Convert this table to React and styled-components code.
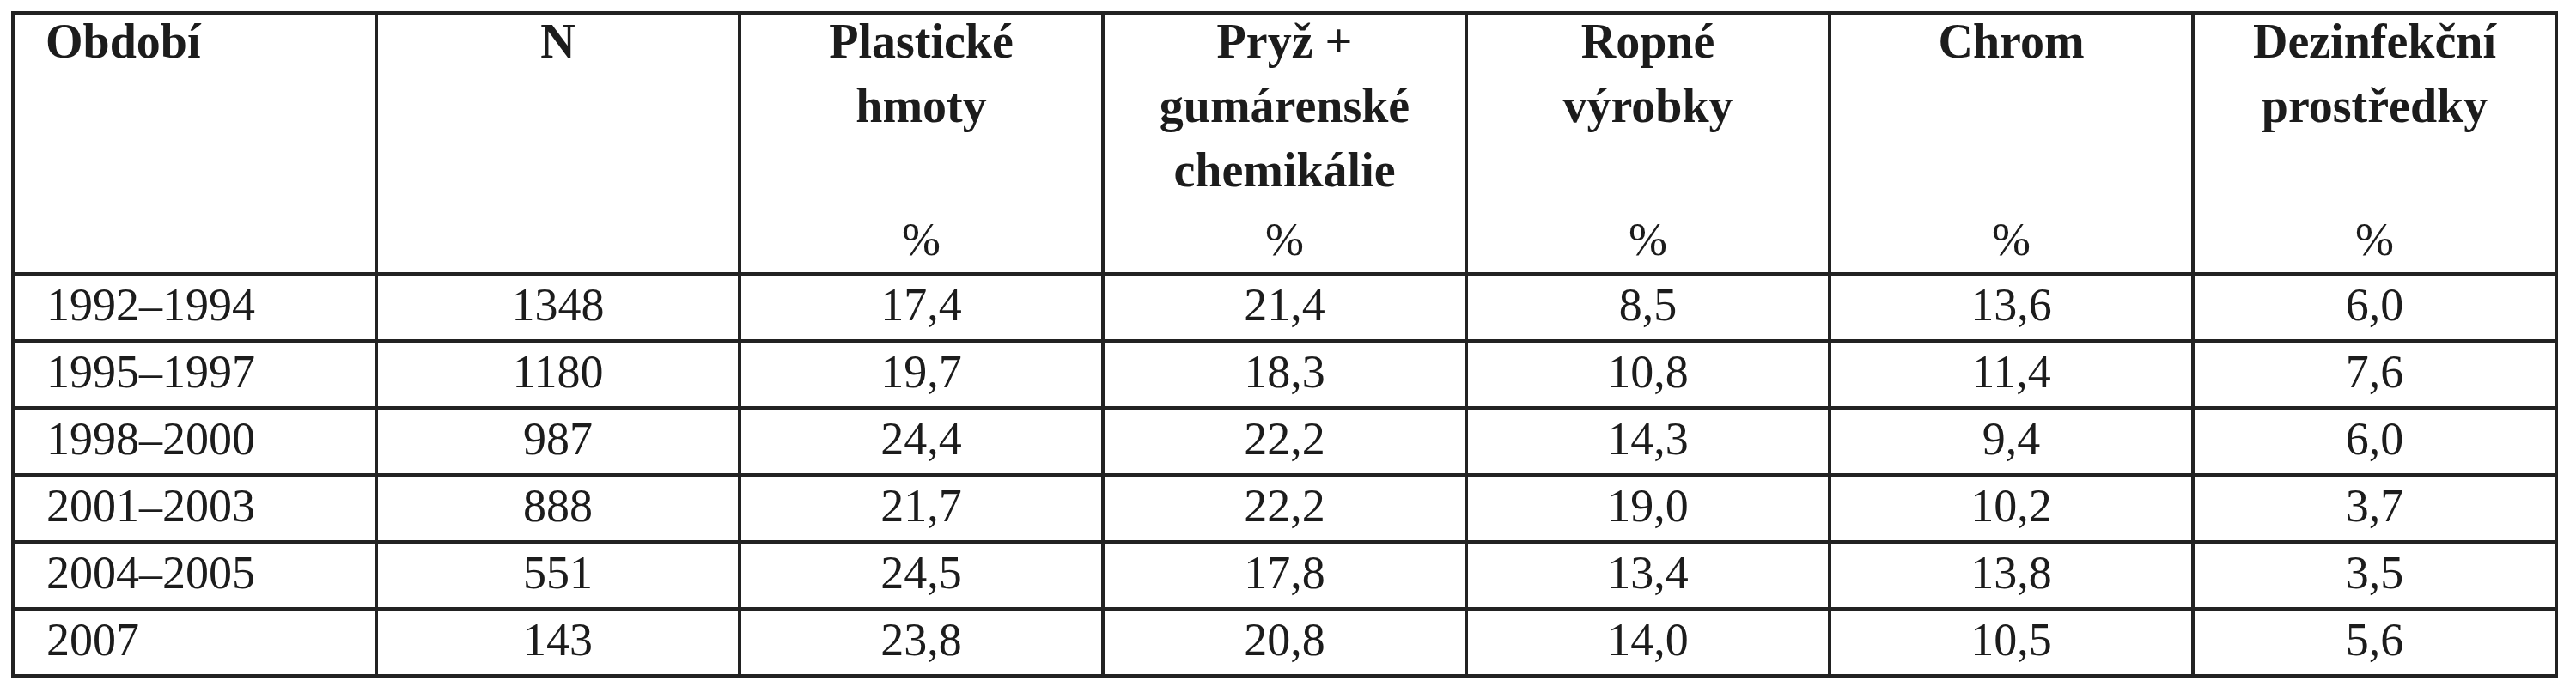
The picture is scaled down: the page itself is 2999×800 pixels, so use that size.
import React from "react";
import styled, { createGlobalStyle } from "styled-components";

const Global = createGlobalStyle`
  html, body { margin: 0; padding: 0; background: #ffffff; }
  body { font-family: "Liberation Serif", "Times New Roman", serif; color: #1c1c1c; }
`;

const Page = styled.div`
  padding: 13px 0 0 13px;
`;

const Table = styled.table`
  table-layout: fixed;
  width: 2965px;
  border-collapse: separate;
  border-spacing: 0;
  border-top: 4px solid #222;
  border-left: 4px solid #222;
`;

const HeadCell = styled.th`
  box-sizing: border-box;
  height: 304px;
  padding: 0 ${(p) => (p.$left ? "0 0 36px" : "0")};
  padding-left: ${(p) => (p.$left ? "36px" : "0")};
  border-right: 4px solid #222;
  border-bottom: 4px solid #222;
  vertical-align: top;
  text-align: ${(p) => (p.$left ? "left" : "center")};
`;

const HeadInner = styled.div`
  height: 300px;
  display: flex;
  flex-direction: column;
  justify-content: space-between;
`;

const Title = styled.div`
  margin-top: -6px;
  font-size: 56px;
  font-weight: 700;
  line-height: 75px;
`;

const Unit = styled.div`
  font-size: 54px;
  font-weight: 400;
  line-height: 75px;
`;

const DataCell = styled.td`
  box-sizing: border-box;
  height: 78px;
  padding: 0 0 6px ${(p) => (p.$left ? "37px" : "0")};
  border-right: 4px solid #222;
  border-bottom: 4px solid #222;
  font-size: 54px;
  line-height: 68px;
  text-align: ${(p) => (p.$left ? "left" : "center")};
  vertical-align: top;
  white-space: nowrap;
`;

const headers = [
  { title: ["Období"], unit: false, left: true },
  { title: ["N"], unit: false },
  { title: ["Plastické", "hmoty"], unit: true },
  { title: ["Pryž +", "gumárenské", "chemikálie"], unit: true },
  { title: ["Ropné", "výrobky"], unit: true },
  { title: ["Chrom"], unit: true },
  { title: ["Dezinfekční", "prostředky"], unit: true },
];

const rows = [
  ["1992–1994", "1348", "17,4", "21,4", "8,5", "13,6", "6,0"],
  ["1995–1997", "1180", "19,7", "18,3", "10,8", "11,4", "7,6"],
  ["1998–2000", "987", "24,4", "22,2", "14,3", "9,4", "6,0"],
  ["2001–2003", "888", "21,7", "22,2", "19,0", "10,2", "3,7"],
  ["2004–2005", "551", "24,5", "17,8", "13,4", "13,8", "3,5"],
  ["2007", "143", "23,8", "20,8", "14,0", "10,5", "5,6"],
];

export default function App() {
  return (
    <>
      <Global />
      <Page>
        <Table>
          <thead>
            <tr>
              {headers.map((h, i) => (
                <HeadCell key={i} $left={h.left}>
                  <HeadInner>
                    <Title>
                      {h.title.map((t, j) => (
                        <div key={j}>{t}</div>
                      ))}
                    </Title>
                    {h.unit ? <Unit>%</Unit> : <span />}
                  </HeadInner>
                </HeadCell>
              ))}
            </tr>
          </thead>
          <tbody>
            {rows.map((r, i) => (
              <tr key={i}>
                {r.map((c, j) => (
                  <DataCell key={j} $left={j === 0}>
                    {c}
                  </DataCell>
                ))}
              </tr>
            ))}
          </tbody>
        </Table>
      </Page>
    </>
  );
}
